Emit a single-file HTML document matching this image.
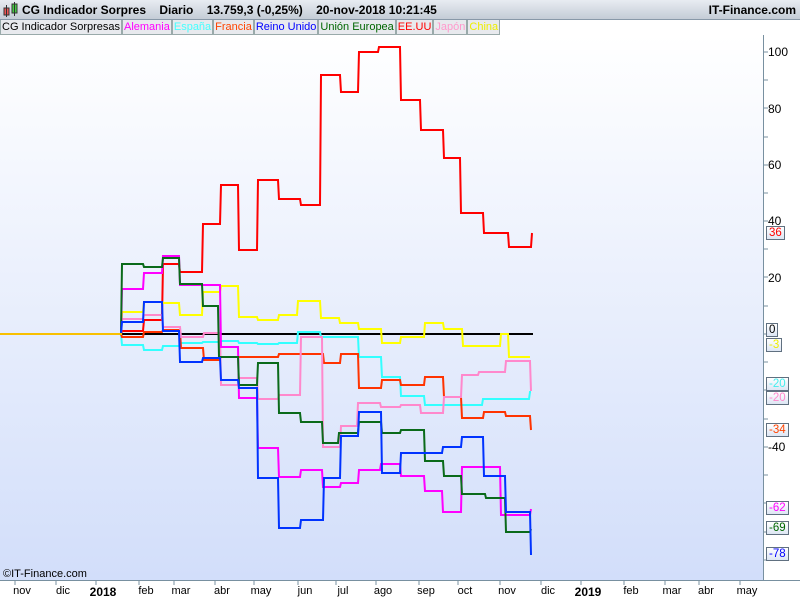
<!DOCTYPE html>
<html><head><meta charset="utf-8"><style>
body{margin:0;width:800px;height:600px;overflow:hidden;background:#fff;font-family:"Liberation Sans",sans-serif;position:relative}
.top{position:absolute;left:0;top:0;width:800px;height:19px;background:linear-gradient(#e8ecf2,#c4ccd6);border-bottom:1px solid #8898a8}
.title{position:absolute;left:22px;top:3px;font-size:12px;font-weight:bold;color:#000;white-space:pre}
.itf{position:absolute;right:4px;top:3px;font-size:12px;font-weight:bold}
.leg{position:absolute;left:0;top:20px;height:15px;display:flex;font-size:11px}
.leg span{border:1px solid #9aa;border-top:none;padding:0 1px;background:#e8eaee;line-height:14px}
.plot{position:absolute;left:0;top:35px;width:763px;height:545px;background:linear-gradient(#ffffff,#d2defa);border-right:1px solid #7890a0}
.ax{position:absolute;left:0;top:580px;width:800px;height:20px;border-top:1px solid #7890a0}
.xl{position:absolute;top:585px;font-size:11px;transform:translateX(-50%)}
.yl{position:absolute;left:768px;font-size:12px}
.bx{position:absolute;left:766px;font-size:11.5px;border:1px solid #607080;background:linear-gradient(#fff,#dde6f4);padding:0 2px;line-height:12px}
</style></head><body>
<div class="top">
<svg style="position:absolute;left:3px;top:2px" width="16" height="16"><rect x="1" y="6" width="5" height="7" fill="#e55" stroke="#333" stroke-width="1"/><line x1="3.5" y1="3" x2="3.5" y2="15" stroke="#333"/><rect x="9" y="2" width="5" height="9" fill="#4c4" stroke="#333"/><line x1="11.5" y1="0" x2="11.5" y2="14" stroke="#333"/></svg>
<div class="title">CG Indicador Sorpres    Diario    13.759,3 (-0,25%)    20-nov-2018 10:21:45</div>
<div class="itf">IT-Finance.com</div></div>
<div class="leg"><span style="color:#000">CG Indicador Sorpresas</span><span style="color:#f0f">Alemania</span><span style="color:#4ff">España</span><span style="color:#f40">Francia</span><span style="color:#00f">Reino Unido</span><span style="color:#060">Unión Europea</span><span style="color:#f00">EE.UU</span><span style="color:#f9c">Japón</span><span style="color:#ee0">China</span></div>
<div class="plot"></div>
<svg id="s" style="position:absolute;left:0;top:0" width="800" height="600"></svg>
<div style="position:absolute;left:3px;top:568px;font-size:11px">©IT-Finance.com</div>
<div class="ax"></div>
<div class="xl" style="left:22px">nov</div><div class="xl" style="left:63px">dic</div><div class="xl" style="left:103px;font-weight:bold;font-size:12px">2018</div><div class="xl" style="left:146px">feb</div><div class="xl" style="left:181px">mar</div><div class="xl" style="left:222px">abr</div><div class="xl" style="left:261px">may</div><div class="xl" style="left:305px">jun</div><div class="xl" style="left:343px">jul</div><div class="xl" style="left:383px">ago</div><div class="xl" style="left:426px">sep</div><div class="xl" style="left:465px">oct</div><div class="xl" style="left:507px">nov</div><div class="xl" style="left:548px">dic</div><div class="xl" style="left:588px;font-weight:bold;font-size:12px">2019</div><div class="xl" style="left:631px">feb</div><div class="xl" style="left:672px">mar</div><div class="xl" style="left:706px">abr</div><div class="xl" style="left:747px">may</div>
<div class="yl" style="top:45px">100</div><div class="yl" style="top:102px">80</div><div class="yl" style="top:158px">60</div><div class="yl" style="top:214px">40</div><div class="yl" style="top:271px">20</div><div class="yl" style="top:440px">-40</div>
<div class="bx" style="top:226px;color:#f00">36</div>
<div class="bx" style="top:323px;color:#000">0</div>
<div class="bx" style="top:338px;color:#ee0">-3</div>
<div class="bx" style="top:377px;color:#4ee">-20</div>
<div class="bx" style="top:391px;color:#f8c">-20</div>
<div class="bx" style="top:423px;color:#f40">-34</div>
<div class="bx" style="top:501px;color:#f0f">-62</div>
<div class="bx" style="top:521px;color:#060">-69</div>
<div class="bx" style="top:547px;color:#00f">-78</div>
<script>
function st(xs,ys,end){var p="M"+xs[0]+" 334";for(var i=0;i<ys.length;i++){p+=" L"+(xs[i]+1)+" "+ys[i]+" L"+(xs[i+1]||end)+" "+ys[i];}return p;}
var S=[
["#f00",[121,143,162,179,202,220,238,257,278,300,320,340,358,378,400,420,443,460,483,508,531],[331,320,264,272,224,185,250,180,199,205,75,92,52,47,100,130,158,213,233,247,233],532],
["#ff0",[121,143,162,179,202,220,238,257,278,297,320,339,358,381,400,424,443,462,482,500,508],[312,302,303,315,292,286,317,320,315,301,318,323,329,343,337,323,329,346,346,334,357],530],
["#3ff",[121,143,162,179,202,220,238,257,278,297,320,358,381,400,424,462,482,529],[345,350,346,343,342,341,343,344,343,332,337,357,377,396,405,405,399,392],531],
["#f30",[121,143,162,180,203,220,257,278,323,340,358,381,400,424,443,461,483,505,530],[337,332,330,348,360,357,357,354,363,354,388,380,385,377,397,418,412,416,430],531],
["#f8c",[121,143,162,180,203,220,238,257,278,300,322,340,357,380,400,420,443,461,478,505,530],[319,315,327,337,333,385,378,399,395,337,447,426,403,407,405,413,397,375,372,361,391],531],
["#f0f",[121,143,162,179,220,238,257,278,300,322,340,358,380,400,424,442,461,500,530],[289,273,256,285,347,398,448,477,470,487,483,470,464,476,491,512,467,515,509],531],
["#0a6a1a",[121,143,162,179,202,218,238,257,278,300,322,338,358,381,400,424,443,461,485,505,530],[264,267,258,284,306,357,385,363,413,422,443,433,422,433,430,461,476,494,498,532,529],531],
["#0033ff",[121,143,162,179,202,220,238,257,278,300,323,340,358,381,400,442,461,483,505,530],[322,302,331,362,358,380,388,478,528,520,478,436,412,473,453,447,437,476,512,555],531]
];
var h='<line x1="0" y1="334" x2="533" y2="334" stroke="#000" stroke-width="2"/>';
S.forEach(function(s){h+='<path d="'+st(s[1],s[2],s[3])+'" fill="none" stroke="'+s[0]+'" stroke-width="2"/>';});
h+='<line x1="0" y1="334" x2="122" y2="334" stroke="#f8c000" stroke-width="2"/>';
var t="";[52,80,108,137,165,193,221,249,277,306,334,362,390,419,447,475,503,532,560].forEach(function(y){t+='<line x1="764" y1="'+y+'" x2="768" y2="'+y+'" stroke="#7890a0"/>';});
[22,63,103,146,181,222,261,305,343,383,426,465,507,548,588,631,672,706,747].forEach(function(x){t+='<line x1="'+(x-7)+'" y1="581" x2="'+(x-7)+'" y2="585" stroke="#7890a0"/>';});
document.getElementById("s").innerHTML=h+t;
</script>
</body></html>
